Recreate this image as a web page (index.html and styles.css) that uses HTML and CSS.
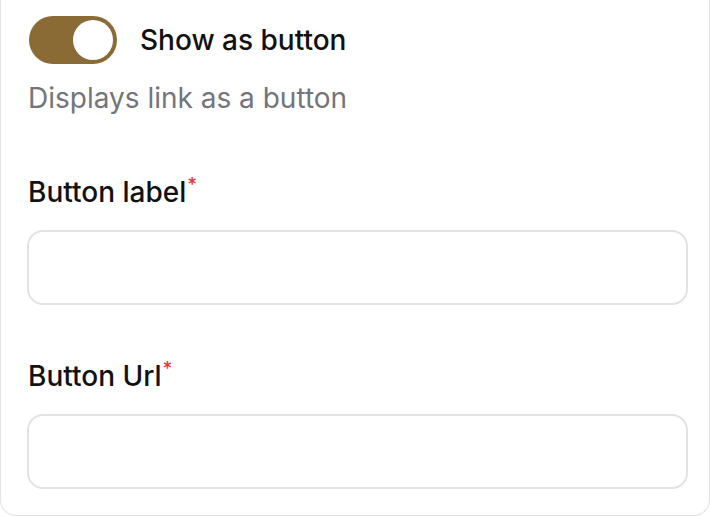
FILE: index.html
```html
<!DOCTYPE html>
<html>
<head>
<meta charset="utf-8">
<link rel="stylesheet" href="styles.css">
</head>
<body>
<div class="card">
  <div class="switch-row">
    <span class="switch"><span class="knob"></span></span>
    <span class="switch-label">Show as button</span>
  </div>
  <p class="hint">Displays link as a button</p>
  <div class="field first">
    <label class="label">Button label<span class="req">*</span></label>
    <div class="input"></div>
  </div>
  <div class="field">
    <label class="label">Button Url<span class="req">*</span></label>
    <div class="input"></div>
  </div>
</div>
</body>
</html>
```
FILE: styles.css
```css
html, body {
  margin: 0;
  padding: 0;
  background: #ffffff;
}
body {
  font-family: Inter, "Liberation Sans", sans-serif;
  color: #111111;
}
.card {
  box-sizing: border-box;
  width: 710px;
  height: 516px;
  border: 1.5px solid #e4e4e4;
  border-top: none;
  border-radius: 0 0 16px 16px;
  padding: 16px 22px 0 26px;
}
.switch-row {
  display: flex;
  align-items: center;
  gap: 23px;
  margin-left: 2px;
}
.switch {
  display: flex;
  justify-content: flex-end;
  align-items: center;
  box-sizing: border-box;
  width: 88px;
  height: 48px;
  padding: 4px;
  border-radius: 24px;
  background: #8a6a35;
}
.knob {
  width: 40px;
  height: 40px;
  border-radius: 50%;
  background: #ffffff;
}
.switch-label {
  font-size: 28px;
  line-height: 36px;
  font-weight: 450;
  color: #111111;
}
.hint {
  margin: 16px 0 0 1px;
  font-size: 28px;
  line-height: 36px;
  color: #74747c;
}
.field {
  display: flex;
  flex-direction: column;
  gap: 20px;
  margin-top: 53px;
}
.field.first {
  margin-top: 58px;
}
.label {
  margin-left: 1px;
  font-size: 28px;
  line-height: 36px;
  font-weight: 450;
  color: #111111;
}
.req {
  color: #e03a3a;
  font-size: 19px;
  vertical-align: top;
  position: relative;
  top: -7px;
  margin-left: 1px;
}
.input {
  box-sizing: border-box;
  height: 75px;
  width: 661px;
  border: 2px solid #e2e2e2;
  border-radius: 16px;
  background: #ffffff;
}
```
